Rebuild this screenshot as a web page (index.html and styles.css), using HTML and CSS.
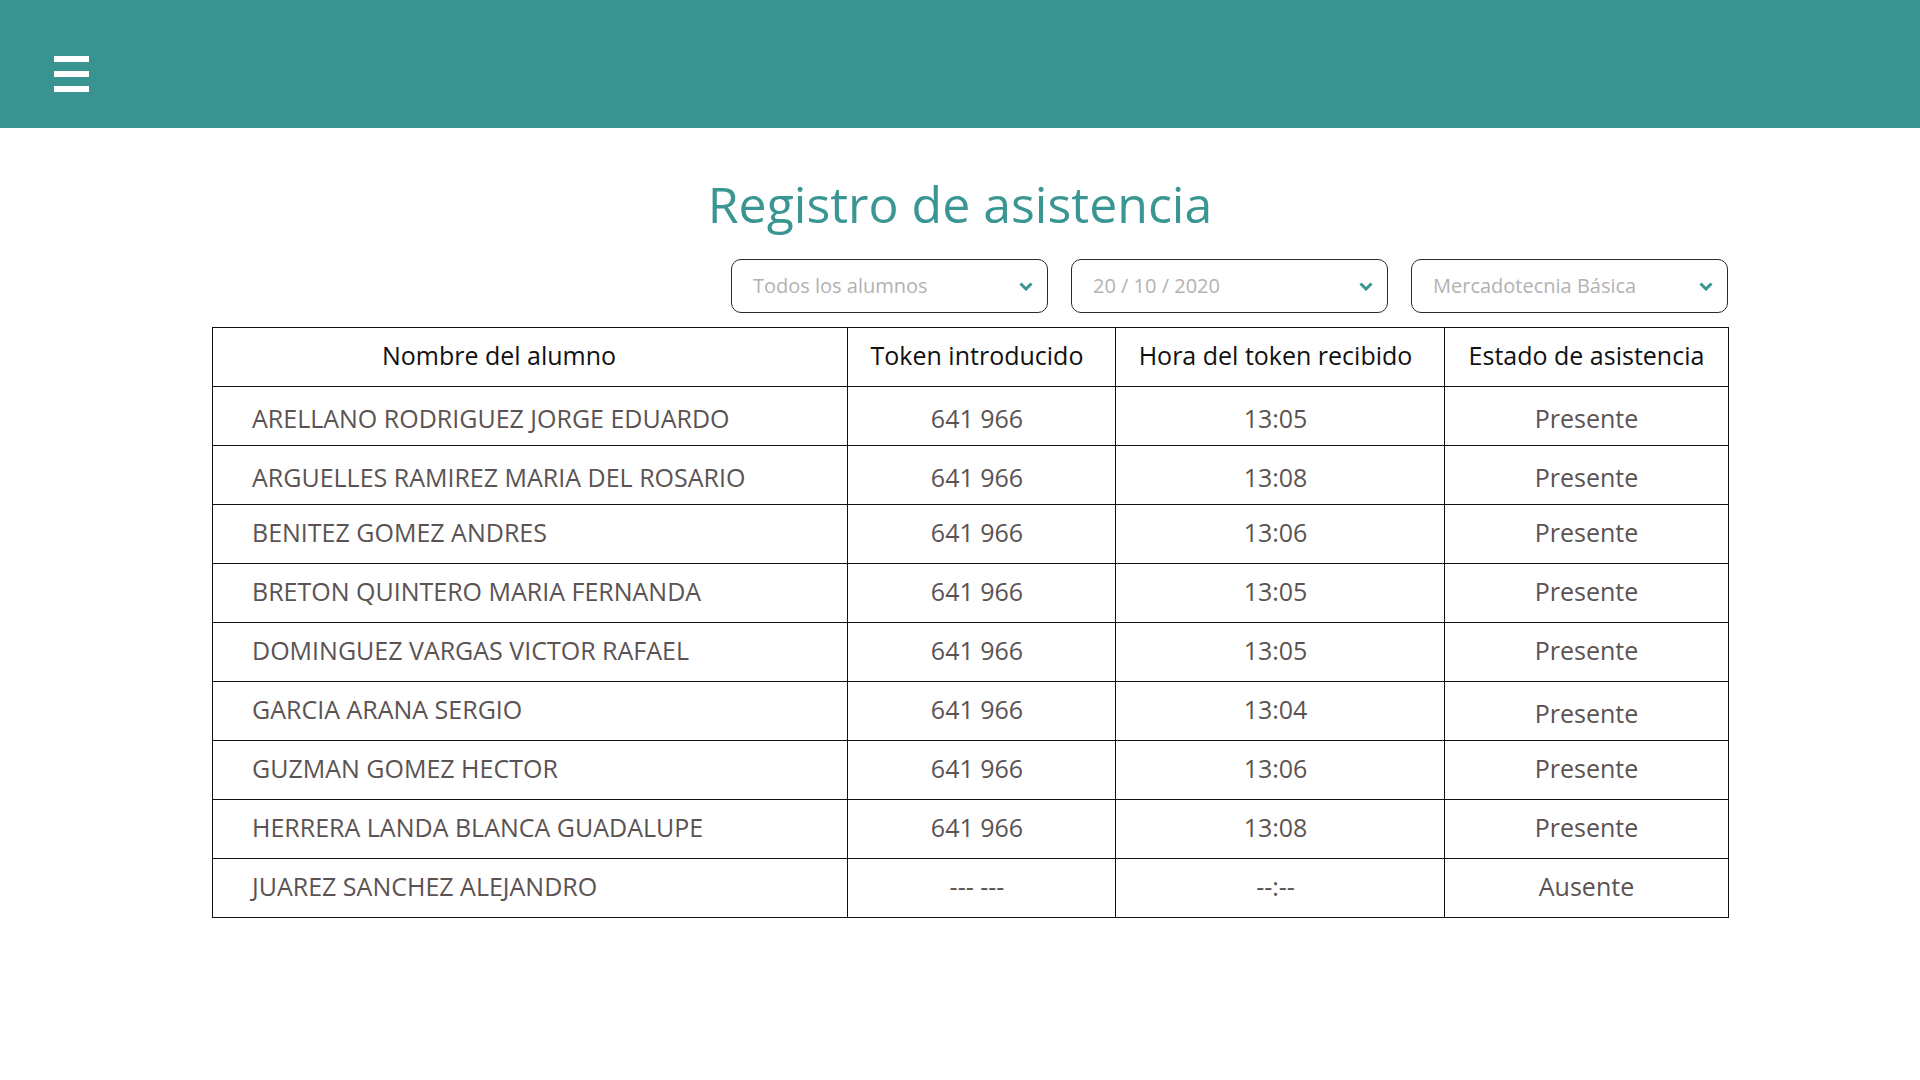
FILE: index.html
```html
<!DOCTYPE html>
<html lang="es">
<head>
<meta charset="utf-8">
<title>Registro de asistencia</title>
<link rel="stylesheet" href="styles.css">
</head>
<body>
<header class="topbar">
  <button class="menu" aria-label="Menú">
    <span class="bar"></span><span class="bar"></span><span class="bar"></span>
  </button>
</header>
<main class="content">
  <h1 class="title">Registro de asistencia</h1>
  <section class="panel">
    <div class="filters">
      <div class="select"><span>Todos los alumnos</span><svg class="chev" viewBox="0 0 14 9"><polyline points="1.5,1.5 7,7 12.5,1.5"/></svg></div>
      <div class="select"><span>20 / 10 / 2020</span><svg class="chev" viewBox="0 0 14 9"><polyline points="1.5,1.5 7,7 12.5,1.5"/></svg></div>
      <div class="select"><span>Mercadotecnia Básica</span><svg class="chev" viewBox="0 0 14 9"><polyline points="1.5,1.5 7,7 12.5,1.5"/></svg></div>
    </div>
    <table class="grid">
      <colgroup>
        <col class="c-name"><col class="c-token"><col class="c-hora"><col class="c-estado">
      </colgroup>
      <thead>
        <tr><th class="name-h">Nombre del alumno</th><th class="mid">Token introducido</th><th class="mid">Hora del token recibido</th><th>Estado de asistencia</th></tr>
      </thead>
      <tbody>
        <tr class="low"><td class="name">ARELLANO RODRIGUEZ JORGE EDUARDO</td><td class="mid">641 966</td><td class="mid">13:05</td><td>Presente</td></tr>
        <tr class="low"><td class="name">ARGUELLES RAMIREZ MARIA DEL ROSARIO</td><td class="mid">641 966</td><td class="mid">13:08</td><td>Presente</td></tr>
        <tr><td class="name">BENITEZ GOMEZ ANDRES</td><td class="mid">641 966</td><td class="mid">13:06</td><td>Presente</td></tr>
        <tr><td class="name">BRETON QUINTERO MARIA FERNANDA</td><td class="mid">641 966</td><td class="mid">13:05</td><td>Presente</td></tr>
        <tr><td class="name">DOMINGUEZ VARGAS VICTOR RAFAEL</td><td class="mid">641 966</td><td class="mid">13:05</td><td>Presente</td></tr>
        <tr><td class="name">GARCIA ARANA SERGIO</td><td class="mid">641 966</td><td class="mid">13:04</td><td class="lower">Presente</td></tr>
        <tr><td class="name">GUZMAN GOMEZ HECTOR</td><td class="mid">641 966</td><td class="mid">13:06</td><td>Presente</td></tr>
        <tr><td class="name">HERRERA LANDA BLANCA GUADALUPE</td><td class="mid">641 966</td><td class="mid">13:08</td><td>Presente</td></tr>
        <tr><td class="name">JUAREZ SANCHEZ ALEJANDRO</td><td class="mid">--- ---</td><td class="mid">--:--</td><td>Ausente</td></tr>
      </tbody>
    </table>
  </section>
</main>
</body>
</html>
```

FILE: styles.css
```css
* { box-sizing: border-box; }
html, body { margin: 0; padding: 0; background: #fff; }
body { font-family: "Open Sans", "Noto Sans", sans-serif; color: #111; }

.topbar {
  height: 128px;
  background: #399390;
  padding: 56px 0 0 54px;
}
.menu {
  display: flex;
  flex-direction: column;
  gap: 9px;
  padding: 0;
  margin: 0;
  border: 0;
  background: transparent;
}
.bar { display: block; width: 35px; height: 6px; background: #fff; }

.content {
  display: flex;
  flex-direction: column;
  align-items: center;
}
.title {
  margin: 43px 0 0;
  font-size: 50px;
  font-weight: 400;
  line-height: 67px;
  color: #3a9692;
}
.panel {
  width: 1516px;
  margin: 21px 0 0 20px;
  display: flex;
  flex-direction: column;
}
.filters {
  display: flex;
  justify-content: flex-end;
  gap: 23px;
}
.select {
  width: 317px;
  height: 54px;
  border: 1px solid #2a2a2a;
  border-radius: 10px;
  display: flex;
  align-items: center;
  justify-content: space-between;
  padding: 0 14px 2px 21px;
  font-size: 20px;
  color: #b2b2b2;
}
.chev { width: 14px; height: 9px; margin-top: 2px; }
.chev polyline { fill: none; stroke: #3a9692; stroke-width: 3; }

.grid {
  margin-top: 14px;
  border-collapse: collapse;
  table-layout: fixed;
  width: 1516px;
  font-size: 25px;
}
.c-name { width: 635px; }
.c-token { width: 268px; }
.c-hora { width: 329px; }
.c-estado { width: 284px; }
.grid th, .grid td {
  border: 1px solid #111;
  height: 59px;
  text-align: center;
  white-space: nowrap;
}
.grid th { font-weight: 400; color: #111; padding: 0 0 4px; }
.grid td { color: #5b5353; padding: 0 0 4px; }
.grid th.name-h { padding-right: 62px; }
.grid .mid { padding-right: 9px; }
.grid td.name { text-align: left; padding-left: 39px; }
.grid tr.low td { padding-top: 4px; padding-bottom: 0; }
.grid td.lower { padding-top: 4px; padding-bottom: 0; }
```
